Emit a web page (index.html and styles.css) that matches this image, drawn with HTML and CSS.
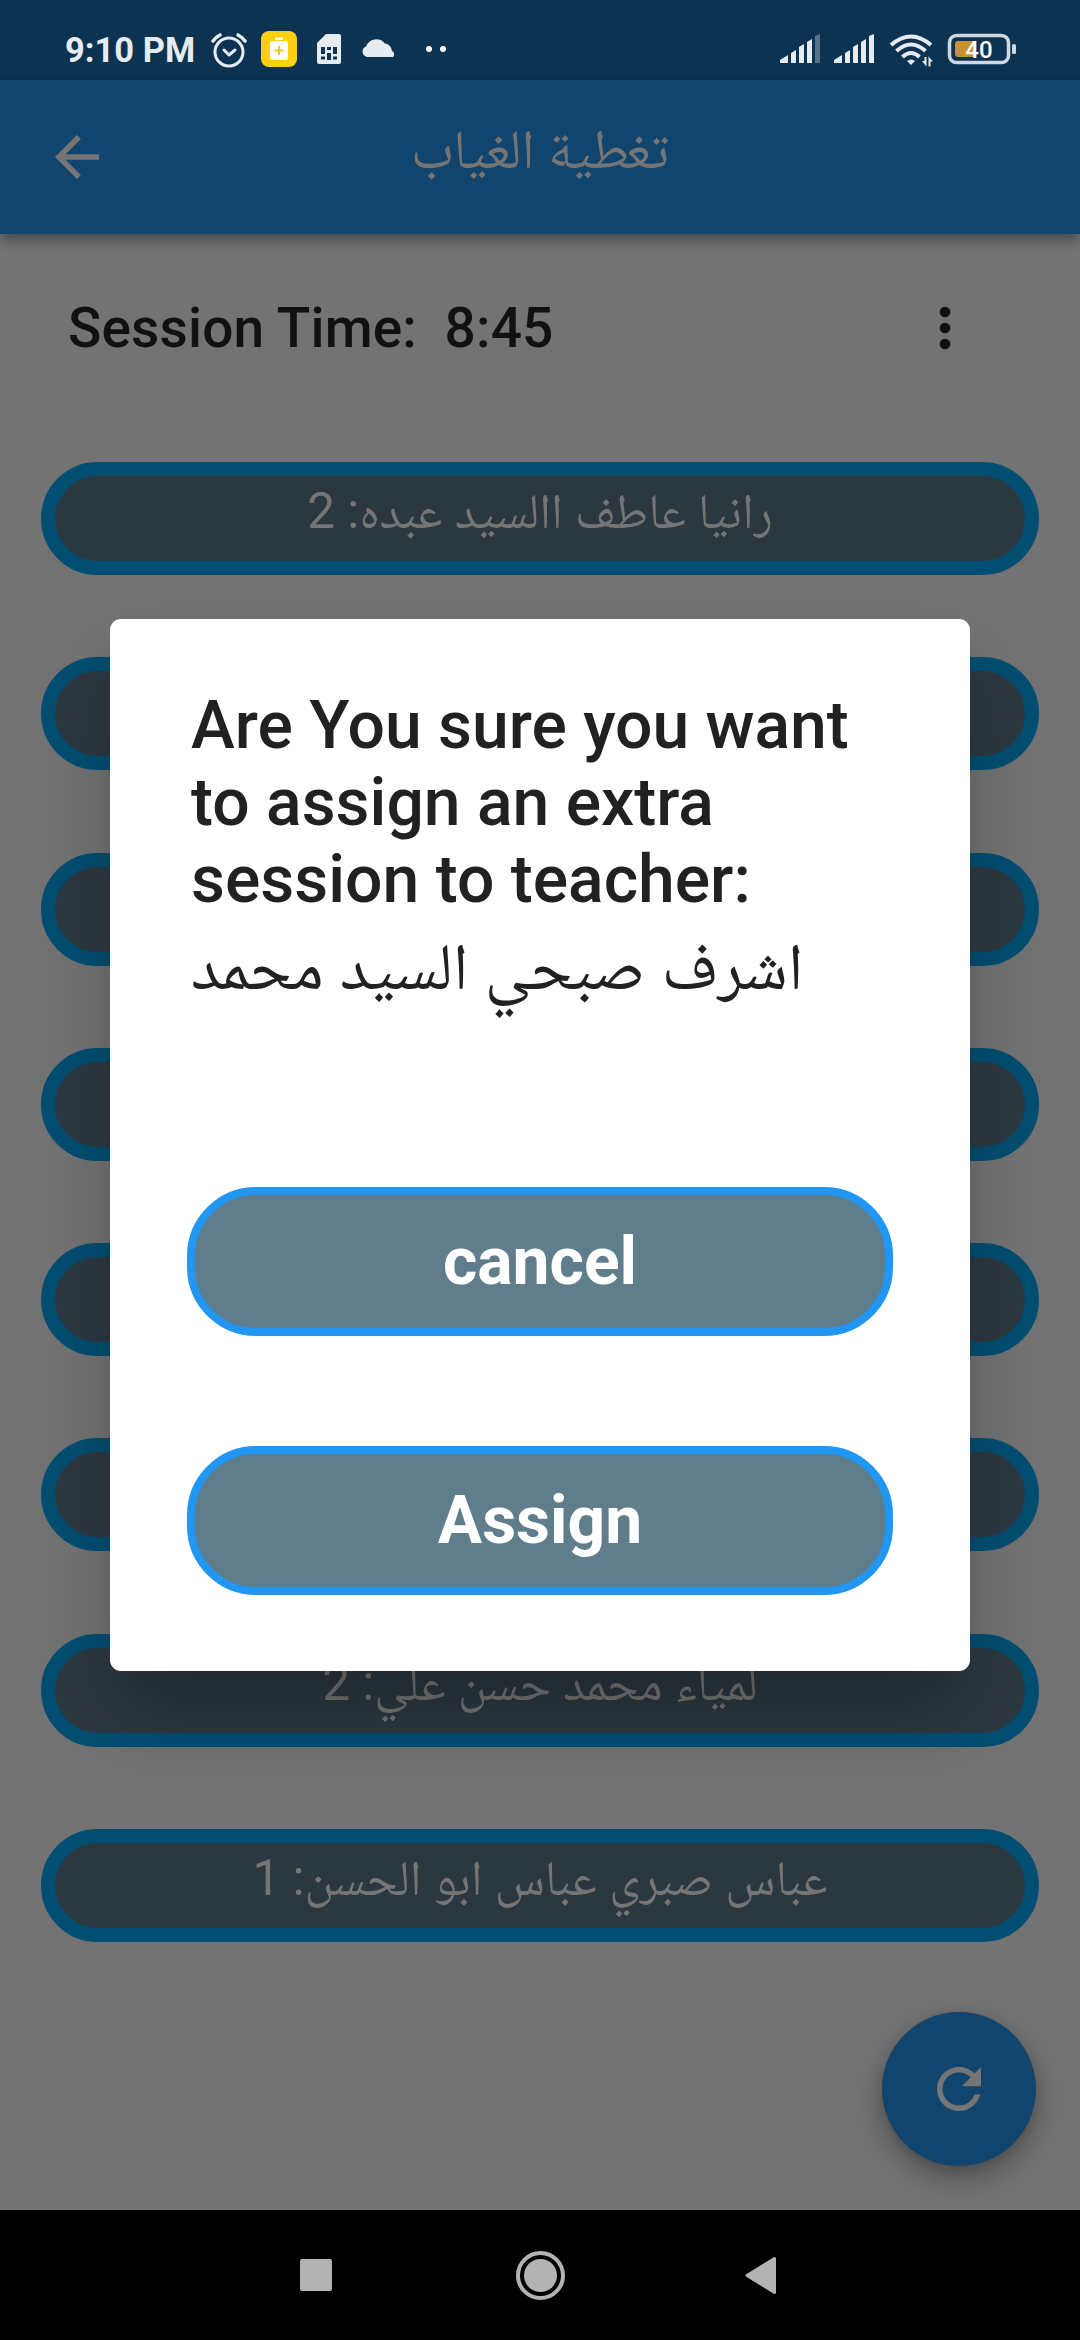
FILE: index.html
```html
<!DOCTYPE html>
<html lang="en">
<head>
<meta charset="utf-8">
<title>تغطية الغياب</title>
<link rel="stylesheet" href="styles.css">
</head>
<body>
<div class="screen">
  <header class="status">
    <span class="clock">9:10 PM</span>
    <svg class="status-left" viewBox="205 20 250 60" width="250" height="60">
      <g fill="none" stroke="#e6ebef" stroke-width="3" stroke-linecap="round" stroke-linejoin="round">
        <circle cx="229" cy="52" r="14"/>
        <path d="M224 50l5 5 6-5" />
        <path d="M213 41q3-4 7-6M245 41q-3-4-7-6" stroke-width="3.6"/>
      </g>
      <rect x="261" y="31" width="36" height="36" rx="8" fill="#ffd012"/>
      <rect x="270" y="41" width="18" height="19" rx="3" fill="#fff"/>
      <rect x="275" y="37.500" width="8" height="2.500" rx="1" fill="#fff"/>
      <path d="M279 46v9M274.500 50.500h9" stroke="#f5c518" stroke-width="2"/>
      <path d="M319 64q-2 0-2-2V43l9-9h13q2 0 2 2v26q0 2-2 2z" fill="#e6ebef"/>
      <path d="M321 47h4v7h-4zM327 47h4v3h-4zM333 47h4v7h-4zM321 56.500h4v3h-4zM327 53h4v7h-4zM333 56.500h4v3h-4z" fill="#0c3351"/>
      <path d="M367 57a5.500 5.500 0 0 1-1-10.500 11 11 0 0 1 19-3 8 8 0 0 1 7 7.500 3.600 3.600 0 0 1 1 6z" fill="#e6ebef"/>
      <circle cx="429" cy="49" r="3" fill="#fff"/><circle cx="443" cy="49" r="3" fill="#fff"/>
    </svg>
    <svg class="status-right" viewBox="770 20 260 60" width="260" height="60">
      <g fill="#e6ebef">
        <path d="M780 63v-3l8-5v8zM791 63V53l5-3v13zM799 63V47l5-3v19zM807 63V42l5-3v24z"/>
        <path d="M834 63v-3l8-5v8zM845 63V53l5-3v13zM853 63V47l5-3v19zM861 63V42l5-3v24zM869 63V36l5-2v29z"/>
        <path d="M815 63V36l5-2v29z" opacity=".35"/>
      </g>
      <g fill="none" stroke="#e6ebef" stroke-width="4">
        <path d="M891 45q20-17 40 0M896.500 51q14.500-13 29 0M902.500 57q8.500-8 17 0"/>
      </g>
      <path d="M907 61q4-3 8 0l-4 4z" fill="#e6ebef"/>
      <path d="M924.500 57h2v9.500l-4.500-5.500h2.500zM928.500 66.500h2v-5h2.500l-4.500-5z" fill="#e6ebef"/>
      <rect x="949.500" y="35.500" width="59" height="27" rx="7" fill="none" stroke="#d0d8df" stroke-width="3.500"/>
      <path d="M958 41h18v16h-18q-3 0-3-3V44q0-3 3-3z" fill="#c9922e"/>
      <rect x="1012" y="44" width="4" height="10" rx="1.500" fill="#d0d8df"/>
      <text x="979" y="58" text-anchor="middle" class="charge">40</text>
    </svg>
  </header>
  <div class="appbar">
    <svg class="back" viewBox="0 0 24 24"><path d="M20 11H7.830l5.590-5.590L12 4l-8 8 8 8 1.410-1.410L7.830 13H20v-2z"/></svg>
    <h1 class="title" dir="rtl">تغطية الغياب</h1>
  </div>
  <main class="content">
    <div class="session">
      <span>Session Time:&nbsp; 8:45</span>
      <svg class="more" viewBox="0 0 24 24"><circle cx="12" cy="6" r="2"/><circle cx="12" cy="12" r="2"/><circle cx="12" cy="18" r="2"/></svg>
    </div>
    <div class="list">
      <div class="pill"><span dir="rtl">رانيا عاطف االسيد عبده: 2</span></div>
      <div class="pill"></div>
      <div class="pill"></div>
      <div class="pill"></div>
      <div class="pill"></div>
      <div class="pill"></div>
      <div class="pill"><span dir="rtl">لمياء محمد حسن علي: 2</span></div>
      <div class="pill"><span dir="rtl">عباس صبري عباس ابو الحسن: 1</span></div>
    </div>
    <div class="fab"><svg viewBox="0 0 24 24"><path d="M17.650 6.350C16.200 4.900 14.210 4 12 4c-4.420 0-7.990 3.580-7.990 8s3.570 8 7.990 8c3.730 0 6.840-2.550 7.730-6h-2.080c-.82 2.330-3.040 4-5.650 4-3.310 0-6-2.690-6-6s2.690-6 6-6c1.660 0 3.140.69 4.220 1.780L13 11h7V4l-2.350 2.350z"/></svg></div>
    <section class="dialog">
      <p class="question">Are You sure you want<br>to assign an extra<br>session to teacher:</p>
      <p class="teacher"><bdi dir="rtl">اشرف صبحي السيد محمد</bdi></p>
      <div class="btn">cancel</div>
      <div class="btn">Assign</div>
    </section>
  </main>
  <nav class="nav">
    <svg viewBox="0 2210 1080 130" width="1080" height="130" fill="#b3b3b3">
      <rect x="300" y="2259" width="32" height="32" rx="2"/>
      <circle cx="540.500" cy="2275.500" r="16.500"/>
      <circle cx="540.500" cy="2275.500" r="22.500" fill="none" stroke="#b3b3b3" stroke-width="4"/>
      <path d="M747 2275.500L774.500 2258.500V2292.500z" stroke="#b3b3b3" stroke-width="3" stroke-linejoin="round"/>
    </svg>
  </nav>
</div>
</body>
</html>
```
FILE: styles.css
```css
* { box-sizing: border-box; margin: 0; }
body { font-family: Roboto, "Noto Naskh Arabic", "Noto Sans Arabic", "DejaVu Sans", sans-serif; }
svg { display: block; flex: none; }
.screen { width: 1080px; height: 2340px; display: flex; flex-direction: column; background: #737373; overflow: hidden; }
.status { height: 80px; flex: none; display: flex; align-items: flex-start; background: #0c3351; }
.clock { width: 140px; margin-left: 65px; padding-top: 30px; font-size: 34.500px; line-height: 41px; font-weight: 700; color: #e6ebef; white-space: nowrap; }
.status-left, .status-right { margin-top: 20px; }
.status-right { margin-left: 315px; }
.charge { font: 500 24px Roboto, sans-serif; fill: #fff; }
.appbar { height: 154px; flex: none; display: flex; align-items: center; padding-left: 44px; background: #11456e; box-shadow: 0 5px 12px rgba(0,0,0,.4); z-index: 1; }
.back { width: 66px; height: 66px; fill: #757575; }
.title { width: 860px; height: 154px; text-align: center; font-size: 55px; font-weight: 400; line-height: 138px; color: #757575; }
.content { position: relative; flex: 1; }
.session { height: 228px; padding: 62px 102px 0 68px; display: flex; align-items: flex-start; justify-content: space-between; font-size: 55px; line-height: 65px; font-weight: 500; letter-spacing: .15px; color: #111; white-space: nowrap; }
.more { width: 66px; height: 64px; fill: #111; }
.list { display: flex; flex-direction: column; gap: 82.300px; padding: 0 41px; }
.pill { height: 113px; border: 14px solid #004e72; border-radius: 57px; background: #2c3840; color: #757575; font-size: 49.500px; line-height: 70px; text-align: center; white-space: nowrap; }
.fab { position: absolute; left: 882px; top: 1778px; width: 154px; height: 154px; border-radius: 50%; background: #11456e; display: flex; align-items: center; justify-content: center; box-shadow: 0 12px 28px rgba(0,0,0,.32), 0 2px 8px rgba(0,0,0,.1); }
.fab svg { width: 66px; height: 66px; fill: #757575; }
.dialog { position: absolute; left: 110px; top: 384.500px; width: 860px; height: 1052.500px; padding: 68px 77px 0; border-radius: 11px; background: #fff; color: #212121; box-shadow: 0 45px 80px -10px rgba(0,0,0,.3); }
.question { padding-left: 4px; font-size: 66px; line-height: 77px; font-weight: 500; white-space: nowrap; }
.teacher { height: 200px; padding-left: 4px; margin-bottom: 69.500px; font-size: 66px; line-height: 98px; white-space: nowrap; }
.btn { height: 149px; margin-bottom: 110px; border: 8.500px solid #2196f3; border-radius: 69px; background: #607d8b; color: #fff; font-size: 66px; line-height: 133px; font-weight: 700; text-align: center; }
.nav { height: 130px; flex: none; background: #000; z-index: 1; }
```
